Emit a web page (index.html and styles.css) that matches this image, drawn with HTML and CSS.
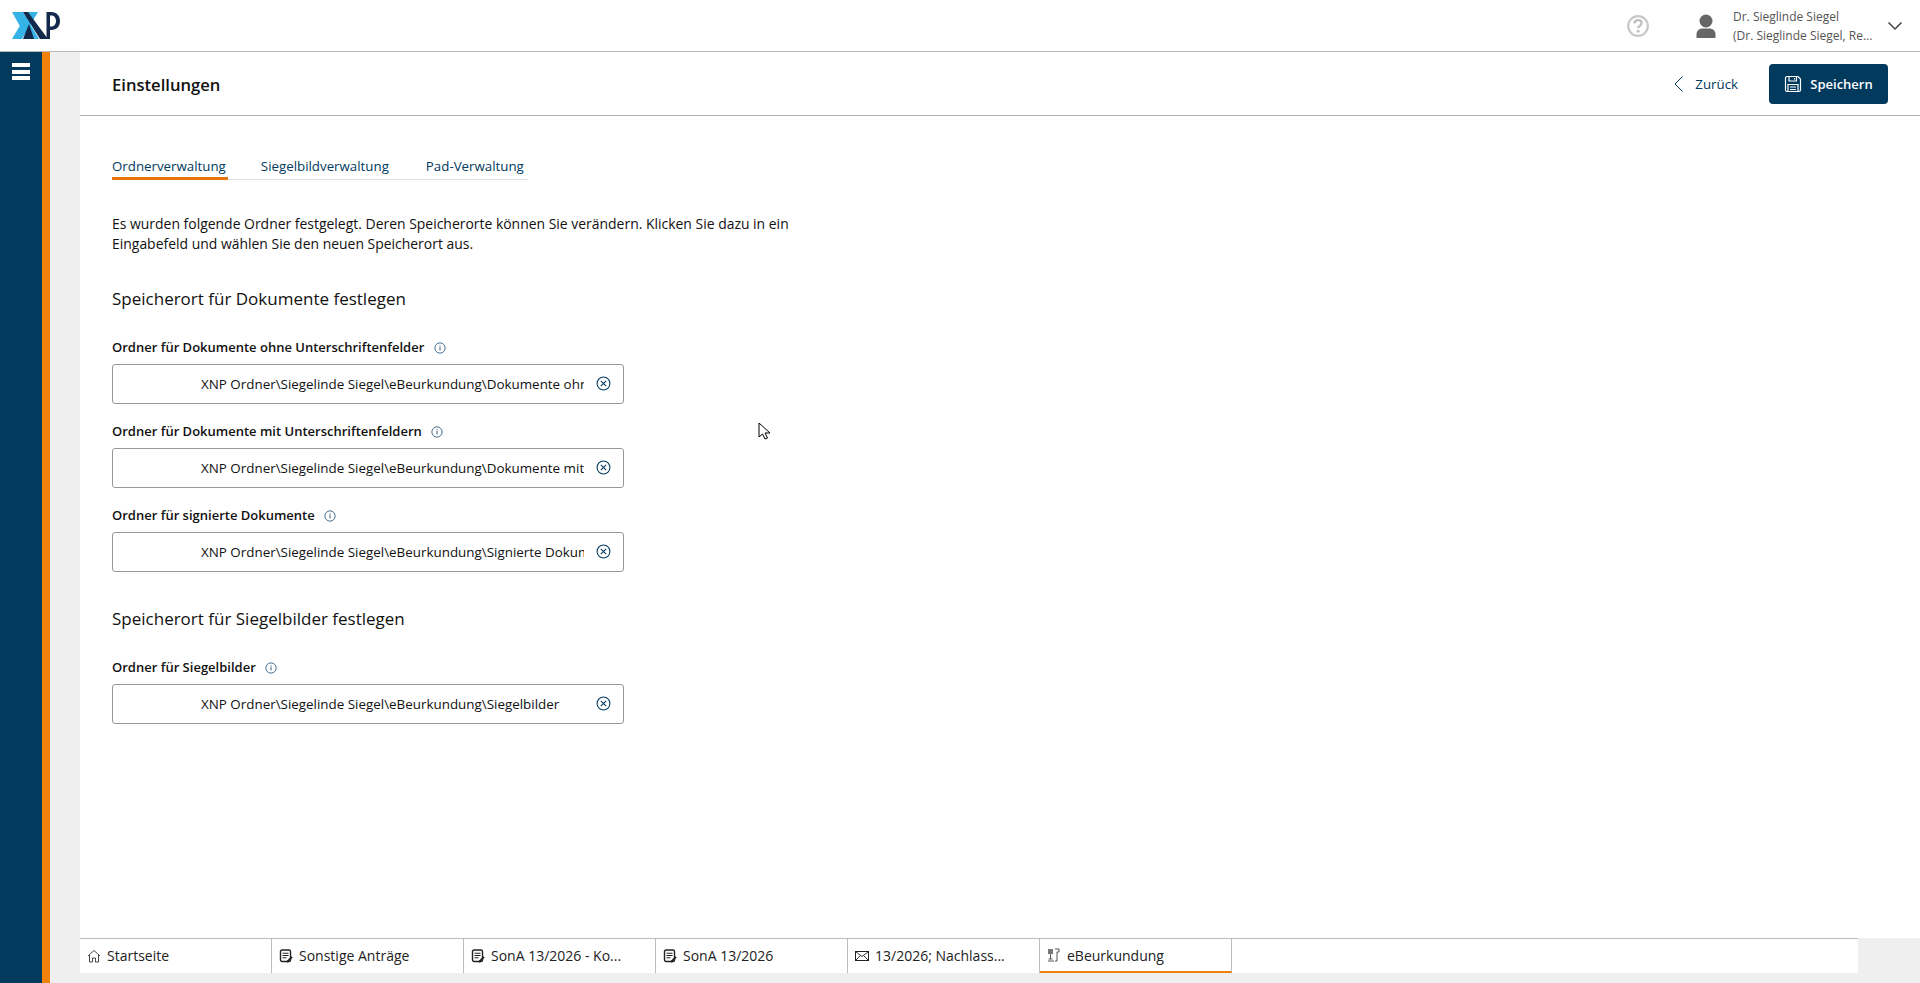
FILE: index.html
```html
<!DOCTYPE html>
<html lang="de">
<head>
<meta charset="utf-8">
<title>Einstellungen</title>
<link rel="stylesheet" href="styles.css">
</head>
<body>
<header class="topbar">
  <svg class="logo" width="50" height="28" viewBox="11 12 50 28">
    <path d="M12 12h11l16 27H27z" fill="#36b3e6"/>
    <path d="M28 12h10L22 39H12z" fill="#36b3e6"/>
    <path d="M23 39l6-15 5 15z" fill="#13294b"/>
    <path d="M23 12h5l20 27h-8z" fill="#13294b"/>
    <path d="M46.500 12h3.500v27h-3.500z" fill="#13294b"/>
    <path d="M50 12h1c6 0 9 4 9 9s-3 9-9 9h-1v-3.500h1c3 0 5-2 5-5.500s-2-5.500-5-5.500h-1z" fill="#13294b"/>
  </svg>
  <div class="topbar-right">
    <svg class="help" width="24" height="24" viewBox="0 0 24 24">
      <circle cx="12" cy="12" r="9.800" fill="none" stroke="#c8c8c8" stroke-width="2.200"/>
      <path d="M8.500 9.500c0-2 1.600-3.300 3.600-3.300s3.500 1.200 3.500 3c0 2.600-3.500 2.600-3.500 5" fill="none" stroke="#c0c0c0" stroke-width="2.300"/>
      <circle cx="12.100" cy="17.300" r="1.500" fill="#c0c0c0"/>
    </svg>
    <svg class="avatar" width="20" height="24" viewBox="0 0 20 24">
      <circle cx="10" cy="7" r="6.500" fill="#666"/>
      <path d="M.500 24v-3.500c0-4 3-6 6-6h7c3 0 6 2 6 6V24z" fill="#666"/>
    </svg>
    <div class="user">
      <div>Dr. Sieglinde Siegel</div>
      <div>(Dr. Sieglinde Siegel, Re...</div>
    </div>
    <svg class="chev" width="16" height="10" viewBox="0 0 16 10">
      <path d="M1.500 1.500L8 8l6.500-6.500" fill="none" stroke="#444" stroke-width="1.500"/>
    </svg>
  </div>
</header>
<div class="shell">
  <aside class="sidebar">
    <div class="burger"><span></span><span></span><span></span></div>
  </aside>
  <div class="gutter"></div>
  <main class="main">
    <div class="titlebar">
      <h1>Einstellungen</h1>
      <div class="actions">
        <a class="back">
          <svg width="10" height="16" viewBox="0 0 10 16"><path d="M8.500 .5L1 8l7.500 7.500" fill="none" stroke="#023a5e" stroke-width="1"/></svg>
          <span>Zurück</span>
        </a>
        <button class="save">
          <svg width="18" height="18" viewBox="0 0 18 18" fill="none" stroke="#fff" stroke-width="1.200">
            <path d="M3 1.500h11l2.500 2.500v11a1.500 1.500 0 0 1-1.500 1.500H3A1.500 1.500 0 0 1 1.500 15V3A1.500 1.500 0 0 1 3 1.500z"/>
            <path d="M5 1.500v4.500h7.500V1.500M10.500 3v1.500M4 16.500V9.500h10v7M6 12h6M6 14.500h6"/>
          </svg>
          <span>Speichern</span>
        </button>
      </div>
    </div>
    <div class="content">
      <nav class="tabs">
        <a class="tab active">Ordnerverwaltung</a>
        <a class="tab">Siegelbildverwaltung</a>
        <a class="tab">Pad-Verwaltung</a>
      </nav>
      <p class="intro">Es wurden folgende Ordner festgelegt. Deren Speicherorte können Sie verändern. Klicken Sie dazu in ein Eingabefeld und wählen Sie den neuen Speicherort aus.</p>
      <h2>Speicherort für Dokumente festlegen</h2>
      <div class="field">
        <label>Ordner für Dokumente ohne Unterschriftenfelder <svg class="info" width="12" height="12" viewBox="0 0 11 11"><use href="#i-info"/></svg></label>
        <div class="box"><input readonly value="XNP Ordner\Siegelinde Siegel\eBeurkundung\Dokumente ohne Unterschriftenfelder"><svg class="clear" width="15" height="15" viewBox="0 0 14 14"><use href="#i-clear"/></svg></div>
      </div>
      <div class="field">
        <label>Ordner für Dokumente mit Unterschriftenfeldern <svg class="info" width="12" height="12" viewBox="0 0 11 11"><use href="#i-info"/></svg></label>
        <div class="box"><input readonly value="XNP Ordner\Siegelinde Siegel\eBeurkundung\Dokumente mit Unterschriftenfeldern"><svg class="clear" width="15" height="15" viewBox="0 0 14 14"><use href="#i-clear"/></svg></div>
      </div>
      <div class="field">
        <label>Ordner für signierte Dokumente <svg class="info" width="12" height="12" viewBox="0 0 11 11"><use href="#i-info"/></svg></label>
        <div class="box"><input readonly value="XNP Ordner\Siegelinde Siegel\eBeurkundung\Signierte Dokumente"><svg class="clear" width="15" height="15" viewBox="0 0 14 14"><use href="#i-clear"/></svg></div>
      </div>
      <h2 class="second">Speicherort für Siegelbilder festlegen</h2>
      <div class="field">
        <label>Ordner für Siegelbilder <svg class="info" width="12" height="12" viewBox="0 0 11 11"><use href="#i-info"/></svg></label>
        <div class="box"><input readonly value="XNP Ordner\Siegelinde Siegel\eBeurkundung\Siegelbilder"><svg class="clear" width="15" height="15" viewBox="0 0 14 14"><use href="#i-clear"/></svg></div>
      </div>
    </div>
    <footer class="taskbar">
      <div class="task"><svg width="14" height="14" viewBox="0 0 14 14"><use href="#i-home"/></svg><span>Startseite</span></div>
      <div class="task"><svg width="14" height="14" viewBox="0 0 14 14"><use href="#i-doc"/></svg><span>Sonstige Anträge</span></div>
      <div class="task"><svg width="14" height="14" viewBox="0 0 14 14"><use href="#i-doc"/></svg><span>SonA 13/2026 - Ko...</span></div>
      <div class="task"><svg width="14" height="14" viewBox="0 0 14 14"><use href="#i-doc"/></svg><span>SonA 13/2026</span></div>
      <div class="task"><svg width="14" height="14" viewBox="0 0 14 14"><use href="#i-mail"/></svg><span>13/2026; Nachlass...</span></div>
      <div class="task current"><svg width="14" height="14" viewBox="0 0 14 14"><use href="#i-seal"/></svg><span>eBeurkundung</span></div>
    </footer>
  </main>
</div>
<svg class="cursor" width="14" height="20" viewBox="0 0 14 20">
  <path d="M1 1v14l3.500-3 2.500 5 2.500-1-2.500-5h5z" fill="#fff" stroke="#000" stroke-width="1"/>
</svg>
<svg class="defs" width="0" height="0">
  <defs>
    <symbol id="i-info" viewBox="0 0 11 11">
      <circle cx="5.500" cy="5.500" r="4.700" fill="none" stroke="#2d5a7c" stroke-width=".8"/>
      <path d="M5.500 4.500v3.200M5.500 3v.9" stroke="#2d5a7c" stroke-width=".9"/>
    </symbol>
    <symbol id="i-clear" viewBox="0 0 14 14">
      <circle cx="7" cy="7" r="6" fill="none" stroke="#023a5e" stroke-width="1"/>
      <path d="M4.500 4.500l5 5M9.500 4.500l-5 5" stroke="#023a5e" stroke-width="1"/>
    </symbol>
    <symbol id="i-home" viewBox="0 0 14 14">
      <path d="M1 7l6-5.500L13 7M2.500 6v7h3V9h3v4h3V6" fill="none" stroke="#333" stroke-width=".9"/>
    </symbol>
    <symbol id="i-doc" viewBox="0 0 14 14">
      <rect x="1.500" y="1" width="10" height="11.500" rx="1.500" fill="none" stroke="#222" stroke-width="1.400"/>
      <path d="M3.500 4.200h6M3.500 6.500h6M3.500 8.800h4" stroke="#222" stroke-width="1.100"/>
      <path d="M8 13l5-5" stroke="#222" stroke-width="1.800"/>
    </symbol>
    <symbol id="i-mail" viewBox="0 0 14 14">
      <rect x=".5" y="2.500" width="13" height="9" fill="none" stroke="#222" stroke-width="1"/>
      <path d="M1 3l6 4.500L13 3M1 11l4.500-4.500M13 11L8.500 6.500" fill="none" stroke="#222" stroke-width=".9"/>
    </symbol>
    <symbol id="i-seal" viewBox="0 0 14 14">
      <rect x="1" y="1" width="5" height="5" fill="#777"/>
      <path d="M3.500 6v5M1 13h6M1.500 11h4M8 1h4v3h-2M10 4v9H8" fill="none" stroke="#555" stroke-width="1"/>
    </symbol>
  </defs>
</svg>
</body>
</html>
```
FILE: styles.css
```css
* { box-sizing: border-box; }
html, body { margin: 0; height: 100%; }
body {
  height: 983px;
  overflow: hidden;
  display: flex;
  flex-direction: column;
  font-family: "Open Sans", "Noto Sans", sans-serif;
  font-size: 13.950px;
  color: #111;
  background: #fff;
}
.topbar {
  flex: 0 0 52px;
  display: flex;
  justify-content: space-between;
  align-items: center;
  border-bottom: 1px solid #b9b9b9;
  background: #fff;
}
.logo { margin: 0 0 0 11px; }
.topbar-right { display: flex; align-items: center; }
.help { margin-right: 46px; }
.avatar { margin-right: 17px; }
.user { width: 147px; font-size: 12px; line-height: 19px; color: #555; white-space: nowrap; }
.chev { margin: 0 17px 0 7px; }
.shell { flex: 1; display: flex; min-height: 0; }
.sidebar { width: 50px; background: #023a5e; border-right: 8px solid #f08209; }
.burger { display: flex; flex-direction: column; gap: 2.500px; padding: 11px 0 0 12px; }
.burger span { display: block; width: 18px; height: 4px; background: #fff; }
.gutter { width: 30px; background: #efefef; }
.main { flex: 1; display: flex; flex-direction: column; min-width: 0; background: #efefef; padding-bottom: 10px; }
.titlebar {
  flex: 0 0 64px;
  display: flex;
  align-items: center;
  justify-content: space-between;
  padding: 0 32px;
  background: #fff;
  border-bottom: 1px solid #b0b0b0;
}
h1 { margin: 2px 0 0; font-size: 16.600px; font-weight: 600; color: #111; }
.actions { display: flex; align-items: center; gap: 31px; }
.back { display: flex; align-items: center; gap: 11px; color: #023a5e; font-size: 13.300px; }
.save {
  width: 119px; height: 40px;
  display: flex; align-items: center; justify-content: center; gap: 8px;
  background: #023a5e; color: #fff; border: 0; border-radius: 4px;
  font: 600 13px "Open Sans", sans-serif;
}
.content { flex: 1; background: #fff; padding: 40px 32px 0; min-height: 0; }
.tabs { display: inline-flex; gap: 33px; border-bottom: 1px solid #ddd; height: 24px; vertical-align: top; }
.tab { color: #023a5e; font-size: 13.300px; line-height: 20px; height: 23px; padding-right: 4px; }
.tab.active { height: 24px; border-bottom: 3px solid #e8730a; padding-right: 2px; }
.intro { width: 700px; margin: 34px 0 0; line-height: 20px; color: #111; }
h2 { margin: 33px 0 0; font-size: 17px; font-weight: 400; line-height: 24px; color: #111; }
h2.second { margin-top: 35px; }
h2 + .field { margin-top: 27px; }
.field + .field { margin-top: 18px; }
label { display: block; font-weight: 600; font-size: 13px; line-height: 18px; margin-bottom: 8px; color: #111; }
.info { margin-left: 6px; vertical-align: -2px; }
.box {
  width: 512px; height: 40px;
  display: flex; align-items: center;
  border: 1px solid #999; border-radius: 3px;
  padding: 0 12px 0 88px;
  background: #fff;
}
.box input {
  flex: 1; min-width: 0; border: 0; outline: 0; padding: 0;
  font: 13.400px "Open Sans", sans-serif; color: #111; background: transparent;
  margin-right: 12px;
}
.clear { flex: none; margin-top: -1px; }
.taskbar {
  height: 35px;
  display: flex; margin-right: 62px;
  background: #fff;
  border-top: 1px solid #bbb;
  flex: none;
}
.task {
  width: 192px; display: flex; align-items: center; gap: 6px;
  padding: 0 0 1px 7px; border-right: 1px solid #bbb;
  font-size: 14px; color: #222; white-space: nowrap;
}
.task.current { padding-bottom: 0; border-bottom: 2px solid #f08209; }
.cursor { position: absolute; left: 758px; top: 422px; }
.defs { position: absolute; }
```
